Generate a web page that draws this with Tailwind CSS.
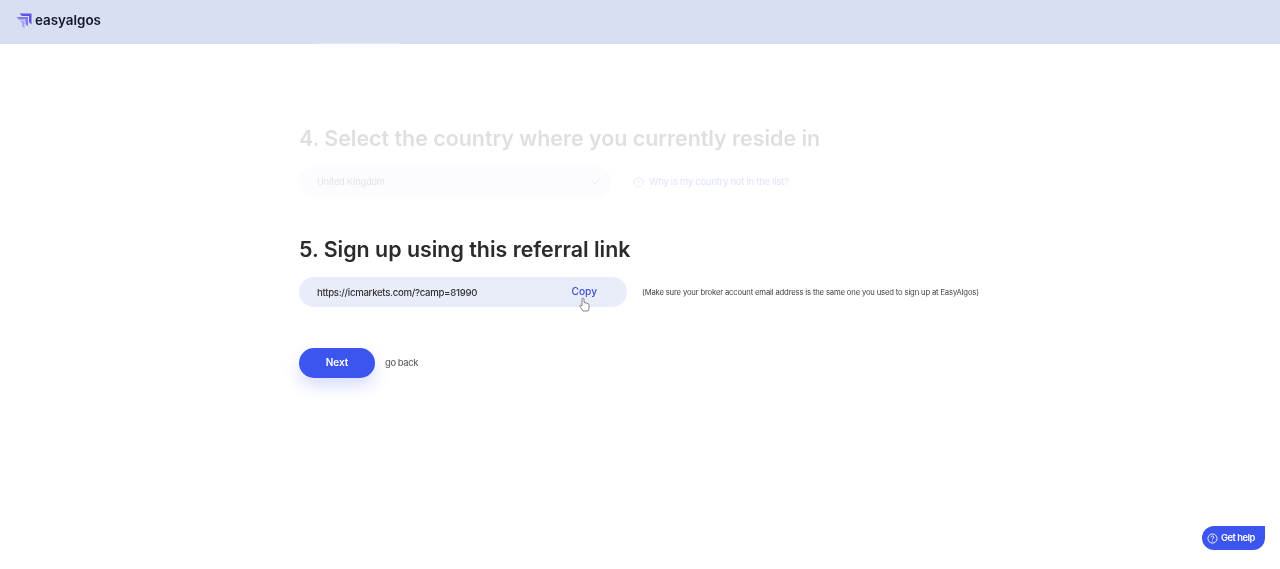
<!doctype html>
<html>
<head>
<meta charset="utf-8">
<script src="https://cdn.jsdelivr.net/npm/@tailwindcss/browser@4"></script>
</head>
<body class="bg-white font-['Inter','Noto_Sans',sans-serif] text-[#2b2b2b]">
<div class="relative h-[569px] w-[1280px] overflow-hidden blur-[0.3px]">
  <header class="flex h-[44px] items-center bg-[#d9dff2] pb-[3px] pl-[16px]">
    <svg width="17" height="16" viewBox="0 0 17 16" class="mr-[2px]">
      <path d="M3.500 0.500H15.500V11.500L13 9V3H6Z" fill="#5b56e6"/>
      <path d="M0.500 4H12V13.500L9.500 11V6.500H2.800Z" fill="#7f7aee"/>
      <path d="M3.500 7.500H8.500V15.500L6 13V10H6Z" fill="#a7a4f5"/>
    </svg>
    <span class="text-[13.400px] font-semibold text-[#15172b]">easyalgos</span>
  </header>

  <main class="pl-[299px]">
    <div class="h-[3px] pl-[20px]">
      <div class="h-[3px] w-[80px] bg-[#fbfbfc] blur-[1px]"></div>
    </div>
    <section class="h-[184px] pt-[72px] opacity-[0.15] blur-[0.6px]">
      <h2 class="text-[21.400px] leading-[38px] font-semibold whitespace-nowrap">4. Select the country where you currently reside in</h2>
      <div class="mt-[10px] flex items-center">
        <div class="flex h-[30px] w-[313px] items-center justify-between rounded-full bg-[#e8ecfa] pr-[12px] pl-[18px] text-[9.200px] font-medium tracking-[-0.2px] text-[#555]">
          <span>United Kingdom</span>
          <svg width="10" height="6" viewBox="0 0 10 6" fill="none" stroke="#888" stroke-width="1"><path d="M1 1L5 5L9 1"/></svg>
        </div>
        <svg width="11" height="11" viewBox="0 0 12 12" fill="none" stroke="#3c55ee" stroke-width="1" class="ml-[21px]">
          <circle cx="6" cy="6" r="5"/><path d="M6 3.500V6.500M6 8V9"/>
        </svg>
        <span class="ml-[5px] text-[9.400px] font-medium tracking-[-0.25px] text-[#3c55ee]">Why is my country not in the list?</span>
      </div>
    </section>

    <section>
      <h2 class="text-[21.400px] leading-[36px] font-semibold whitespace-nowrap text-[#2b2b2b]">5. Sign up using this referral link</h2>
      <div class="mt-[10px] flex items-center">
        <div class="flex h-[30px] w-[328px] items-center justify-between rounded-full bg-[#e9edfa] pr-[30px] pl-[18px] text-[#333]">
          <span class="pt-[2px] text-[9.600px] font-medium tracking-[-0.29px]">https://icmarkets.com/?camp=81990</span>
          <span class="text-[10.200px] font-medium text-[#3a4fd0]">Copy</span>
        </div>
        <p class="ml-[15px] pt-[1px] text-[7.700px] tracking-[-0.17px] whitespace-nowrap text-[#444]">(Make sure your broker account email address is the same one you used to sign up at EasyAlgos)</p>
      </div>
      <div class="mt-[41px] flex items-center">
        <button class="h-[30px] w-[76px] rounded-full bg-[#3c55ee] pb-[1px] text-[10px] font-semibold text-white shadow-[0_8px_16px_rgba(60,85,238,0.2)]">Next</button>
        <span class="ml-[10px] pt-[1px] text-[9.400px] font-medium tracking-[-0.4px] text-[#666]">go back</span>
      </div>
    </section>
  </main>

  <svg width="11" height="15" viewBox="0 0 11 15" class="absolute top-[297px] left-[579px]">
    <path d="M3 7V2C3 0.800 5 0.800 5 2V5.500L9 6.500C10 6.800 10 8 10 9V12L9 14H4L1 9.500C0.500 8.500 1.800 7.800 3 9Z" fill="#fff" stroke="#555" stroke-width="0.700"/>
  </svg>

  <div class="absolute top-[526px] left-[1202px] flex h-[24px] w-[63px] items-center rounded-l-full rounded-tr-[6px] rounded-br-full bg-[#3c55ee] pl-[5px] text-white">
    <svg width="11" height="11" viewBox="0 0 12 12" fill="none" stroke="#fff" stroke-width="1">
      <circle cx="6" cy="6" r="5"/>
      <path d="M4.500 4.700C4.500 3.700 5.200 3.200 6 3.200C6.900 3.200 7.500 3.800 7.500 4.600C7.500 5.700 6 5.800 6 7"/>
      <path d="M6 8.200V9.200"/>
    </svg>
    <span class="ml-[3px] text-[9.400px] font-semibold tracking-[-0.5px] whitespace-nowrap">Get help</span>
  </div>
</div>
</body>
</html>
